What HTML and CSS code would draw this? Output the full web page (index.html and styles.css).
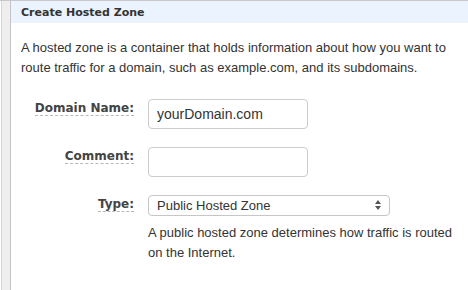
FILE: index.html
```
<!DOCTYPE html>
<html lang="en">
<head>
    <meta charset="UTF-8">
    <title>Create Hosted Zone</title>
    <link rel="stylesheet" href="styles.css">
</head>
<body>

<div class="layout">
    <div class="side-strip"></div>

    <div class="panel">
        <div class="panel-header">Create Hosted Zone</div>

        <div class="panel-body">
            <p class="intro">A hosted zone is a container that holds information about how you want to route traffic for a domain, such as example.com, and its subdomains.</p>

            <div class="zone-form">
                <label class="field-label" for="domainName"><span>Domain Name:</span></label>
                <div class="field">
                    <input type="text" class="text-input" id="domainName" value="yourDomain.com">
                </div>

                <label class="field-label" for="comment"><span>Comment:</span></label>
                <div class="field">
                    <input type="text" class="text-input" id="comment">
                </div>

                <label class="field-label" for="zoneType"><span>Type:</span></label>
                <div class="field">
                    <div class="select-wrap">
                        <select class="select-input" id="zoneType">
                            <option>Public Hosted Zone</option>
                            <option>Private Hosted Zone for Amazon VPC</option>
                        </select>
                        <svg class="select-arrows" width="8" height="12" viewBox="0 0 8 12">
                            <path d="M4 1 L7 5 L1 5 Z" fill="#555"/>
                            <path d="M4 11 L7 7 L1 7 Z" fill="#555"/>
                        </svg>
                    </div>
                    <p class="help">A public hosted zone determines how traffic is routed on the Internet.</p>
                </div>
            </div>
        </div>
    </div>
</div>

</body>
</html>
```

FILE: styles.css
```
body, html {
    margin: 0;
    padding: 0;
    background: #ffffff;
    font-family: 'Liberation Sans', Arial, sans-serif;
    color: #333333;
}

.layout {
    display: flex;
    height: 290px;
    border-top: 1px solid #c8c8c8;
    box-sizing: border-box;
}

.side-strip {
    width: 8px;
    margin-left: 1px;
    background: #eeeeee;
    border-left: 1px solid #d6d6d6;
    border-right: 1px solid #c4c4c4;
}

.panel {
    flex: 1;
}

.panel-header {
    height: 22px;
    padding-left: 10px;
    background: #eaf3fe;
    font-family: 'DejaVu Sans', Verdana, sans-serif;
    font-weight: bold;
    font-size: 11px;
    line-height: 24px;
    color: #333333;
}

.panel-body {
    padding: 15px 0 0 10px;
}

.intro {
    margin: 0;
    font-size: 13px;
    line-height: 20px;
    color: #333333;
}

.zone-form {
    display: grid;
    grid-template-columns: 113px 1fr;
    column-gap: 14px;
    row-gap: 18px;
    margin-top: 21px;
}

.field-label {
    text-align: right;
    padding-top: 1px;
    font-family: 'DejaVu Sans', Verdana, sans-serif;
    font-weight: bold;
    font-size: 12px;
    line-height: 16px;
    color: #444444;
}

.field-label span {
    border-bottom: 1px dashed #b8b8b8;
}

.text-input {
    display: block;
    width: 160px;
    height: 30px;
    box-sizing: border-box;
    padding: 0 8px;
    border: 1px solid #cccccc;
    border-radius: 4px;
    font-family: 'Liberation Sans', Arial, sans-serif;
    font-size: 14px;
    color: #333333;
    background: #ffffff;
    outline: none;
}

.select-wrap {
    position: relative;
    width: 242px;
}

.select-input {
    display: block;
    width: 242px;
    height: 21px;
    box-sizing: border-box;
    padding: 0 8px;
    border: 1px solid #c6c6c6;
    border-radius: 4px;
    background: #ffffff;
    font-family: 'Liberation Sans', Arial, sans-serif;
    font-size: 13px;
    color: #333333;
    appearance: none;
    -webkit-appearance: none;
    outline: none;
}

.select-arrows {
    position: absolute;
    right: 8px;
    top: 4px;
}

.help {
    margin: 7px 0 0 0;
    width: 310px;
    font-size: 13px;
    line-height: 20px;
    color: #333333;
}
```
